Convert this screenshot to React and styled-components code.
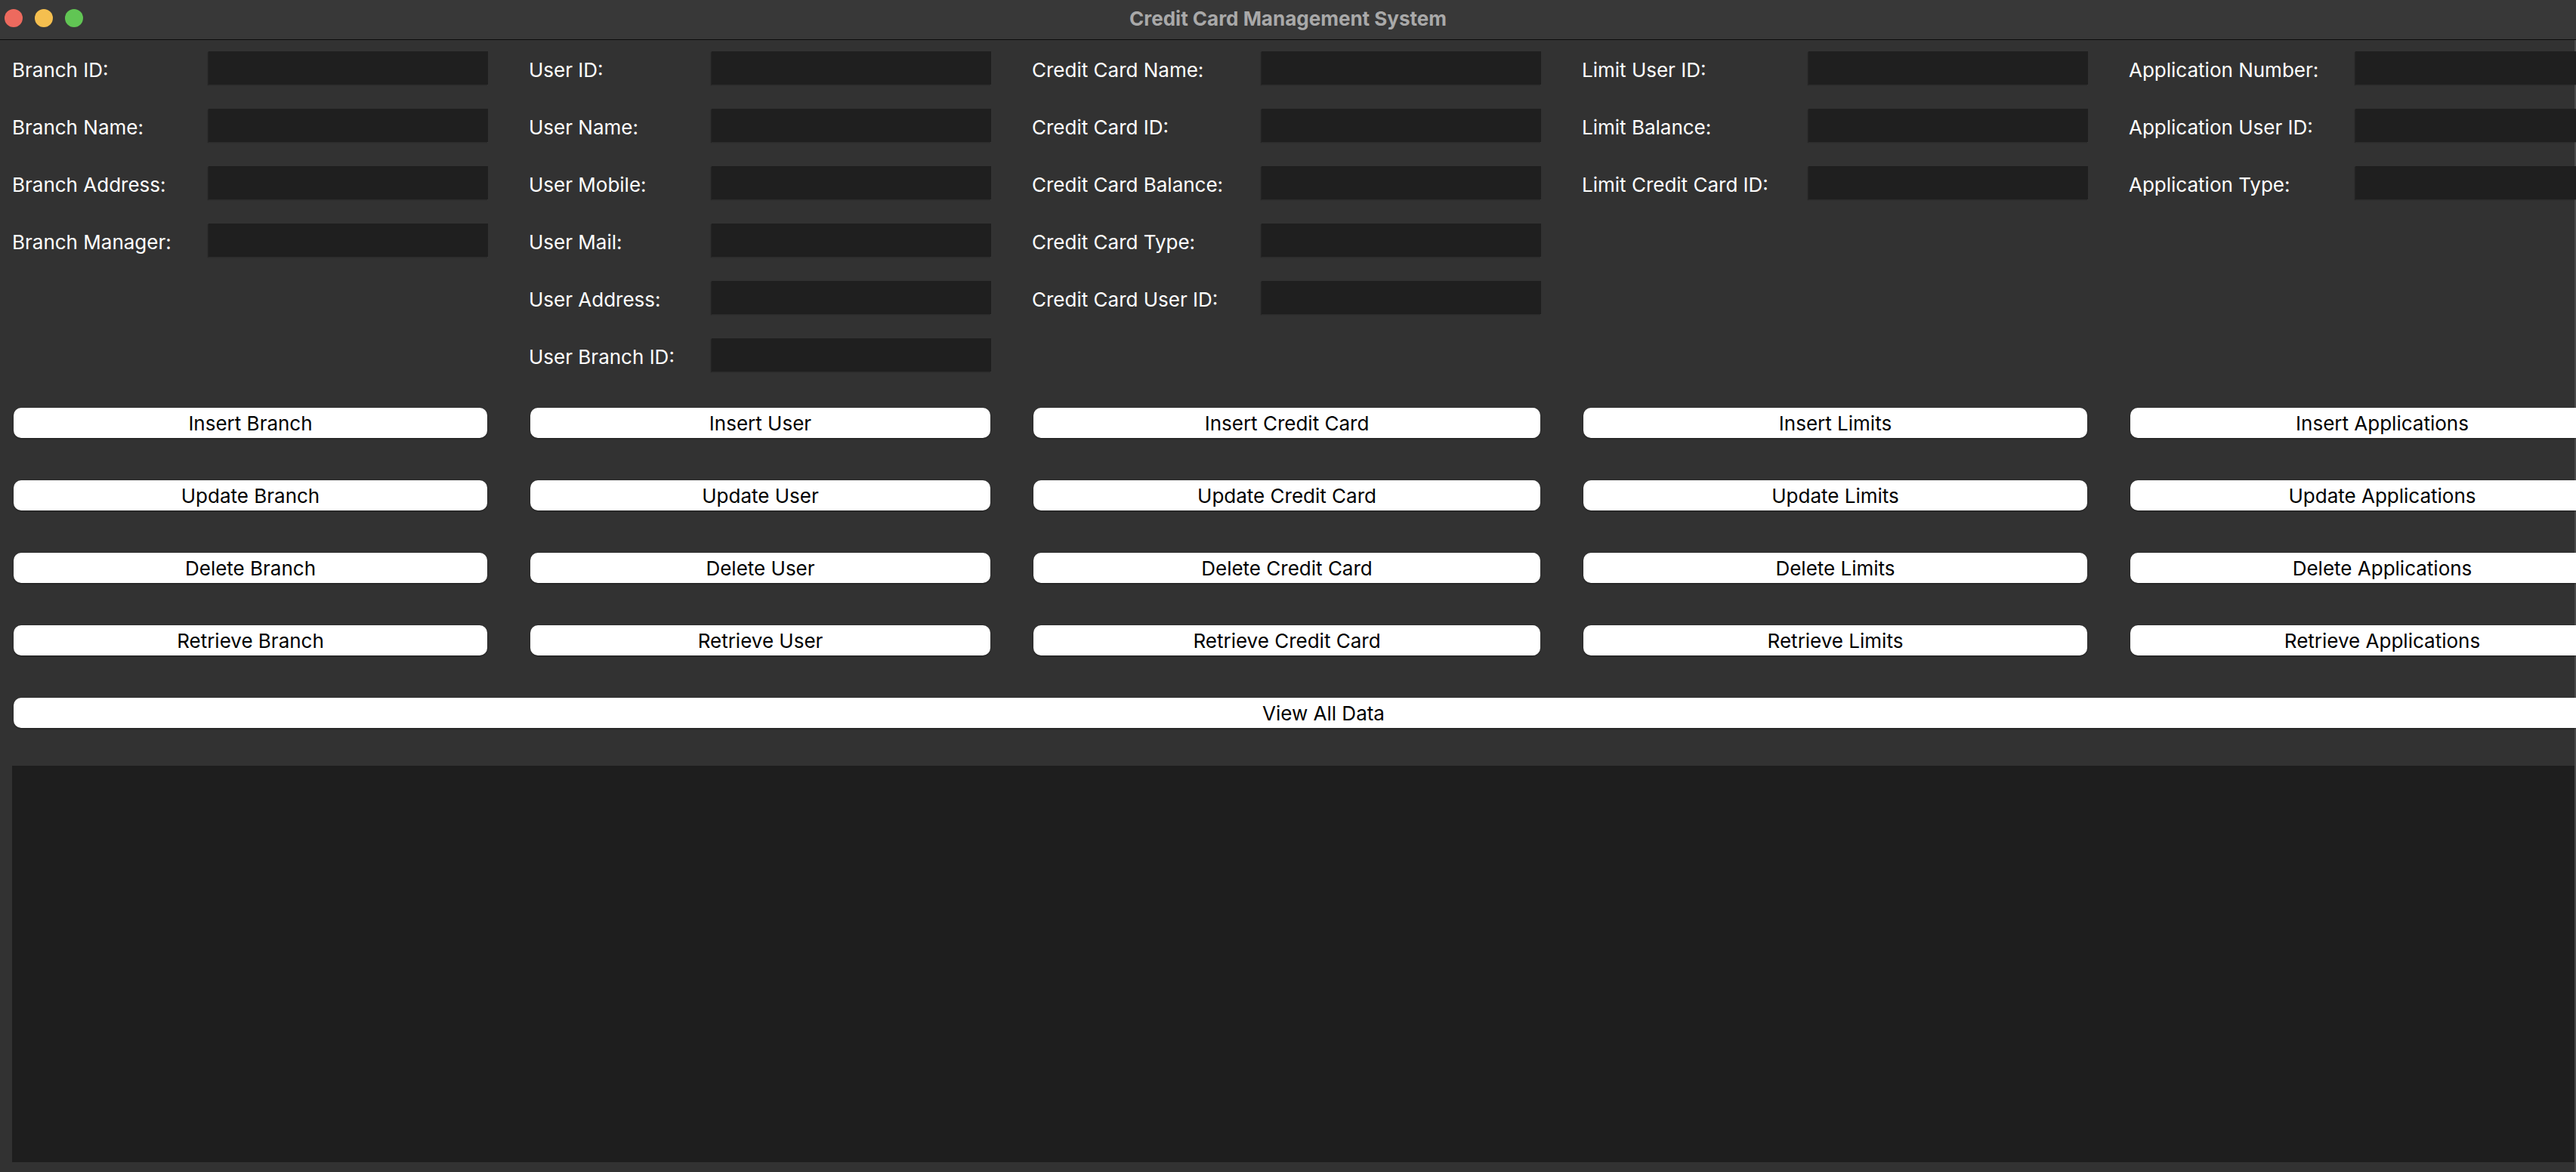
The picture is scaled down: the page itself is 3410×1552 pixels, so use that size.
import React from 'react';
import styled, { createGlobalStyle } from 'styled-components';

const GlobalStyle = createGlobalStyle`
  html, body {
    margin: 0;
    padding: 0;
    background: #323232;
  }
  body {
    font-family: Inter, "Liberation Sans", sans-serif;
  }
`;

const Window = styled.div`
  width: 3410px;
  height: 1552px;
  overflow: hidden;
  display: flex;
  flex-direction: column;
  background: #323232;
`;

const TitleBar = styled.div`
  height: 52px;
  flex-shrink: 0;
  display: grid;
  grid-template-columns: 1fr auto 1fr;
  align-items: center;
  background: #383838;
  border-bottom: 1px solid #0c0c0c;
`;

const Lights = styled.div`
  display: flex;
  gap: 16px;
  padding-left: 6px;
  padding-bottom: 4px;
`;

const Light = styled.span`
  width: 24px;
  height: 24px;
  border-radius: 50%;
  background: ${({ color }) => color};
`;

const Title = styled.div`
  font-size: 26px;
  font-weight: 700;
  color: #a9a9a9;
  padding-bottom: 4px;
`;

const Body = styled.div`
  flex: 1;
  display: flex;
  flex-direction: column;
  padding: 15px 0 13px 16px;
  background: linear-gradient(to left, #4a4a4a 2px, #323232 2px);
`;

const GroupRow = styled.div`
  display: flex;
  align-items: flex-start;
  gap: 54px;
  width: 4000px;
  flex-shrink: 0;
`;

const ButtonRow = styled(GroupRow)`
  margin-top: 48px;
`;

const FieldGroup = styled.div`
  display: flex;
  flex-direction: column;
  gap: 32px;
  width: ${({ labelWidth }) => labelWidth + 370}px;
  height: 424px;
`;

const FieldRow = styled.div`
  display: flex;
  align-items: center;
  height: 44px;
  flex-shrink: 0;
`;

const Label = styled.label`
  width: ${({ labelWidth }) => labelWidth}px;
  flex-shrink: 0;
  font-size: 26px;
  color: #ffffff;
  padding-top: 4px;
  white-space: nowrap;
`;

const Entry = styled.div`
  width: 370px;
  height: 44px;
  background: #1f1f1f;
  box-shadow: -1px 1px 1px rgba(0, 0, 0, 0.25), 0 1px 0 rgba(255, 255, 255, 0.04);
`;

const ButtonGroup = styled.div`
  display: flex;
  flex-direction: column;
  gap: 56px;
  width: ${({ labelWidth }) => labelWidth + 370}px;
  padding: 0 1px 0 2px;
  box-sizing: border-box;
`;

const Button = styled.button`
  height: 40px;
  flex-shrink: 0;
  border: none;
  border-radius: 10px;
  background: #ffffff;
  color: #000000;
  font-family: Inter, "Liberation Sans", sans-serif;
  font-size: 26px;
  padding: 0;
  box-shadow: 0 1px 2px rgba(0, 0, 0, 0.45);
  white-space: nowrap;
`;

const WideButton = styled(Button)`
  width: 3468px;
  margin: 56px 0 0 2px;
`;

const Output = styled.div`
  margin-top: 50px;
  flex: 1;
  margin-right: 2px;
  background: #1e1e1e;
`;

const groups = [
  {
    labelWidth: 260,
    name: 'Branch',
    fields: ['Branch ID:', 'Branch Name:', 'Branch Address:', 'Branch Manager:'],
  },
  {
    labelWidth: 242,
    name: 'User',
    fields: ['User ID:', 'User Name:', 'User Mobile:', 'User Mail:', 'User Address:', 'User Branch ID:'],
  },
  {
    labelWidth: 304,
    name: 'Credit Card',
    fields: ['Credit Card Name:', 'Credit Card ID:', 'Credit Card Balance:', 'Credit Card Type:', 'Credit Card User ID:'],
  },
  {
    labelWidth: 300,
    name: 'Limits',
    fields: ['Limit User ID:', 'Limit Balance:', 'Limit Credit Card ID:'],
  },
  {
    labelWidth: 300,
    name: 'Applications',
    fields: ['Application Number:', 'Application User ID:', 'Application Type:'],
  },
];

const actions = ['Insert', 'Update', 'Delete', 'Retrieve'];

export default function App() {
  return (
    <>
      <GlobalStyle />
      <Window>
        <TitleBar>
          <Lights>
            <Light color="#ed6a5e" />
            <Light color="#f5bf4f" />
            <Light color="#61c554" />
          </Lights>
          <Title>Credit Card Management System</Title>
          <div />
        </TitleBar>
        <Body>
          <GroupRow>
            {groups.map((g) => (
              <FieldGroup key={g.name} labelWidth={g.labelWidth}>
                {g.fields.map((f) => (
                  <FieldRow key={f}>
                    <Label labelWidth={g.labelWidth}>{f}</Label>
                    <Entry />
                  </FieldRow>
                ))}
              </FieldGroup>
            ))}
          </GroupRow>
          <ButtonRow>
            {groups.map((g) => (
              <ButtonGroup key={g.name} labelWidth={g.labelWidth}>
                {actions.map((a) => (
                  <Button key={a}>{`${a} ${g.name}`}</Button>
                ))}
              </ButtonGroup>
            ))}
          </ButtonRow>
          <WideButton>View All Data</WideButton>
          <Output />
        </Body>
      </Window>
    </>
  );
}
